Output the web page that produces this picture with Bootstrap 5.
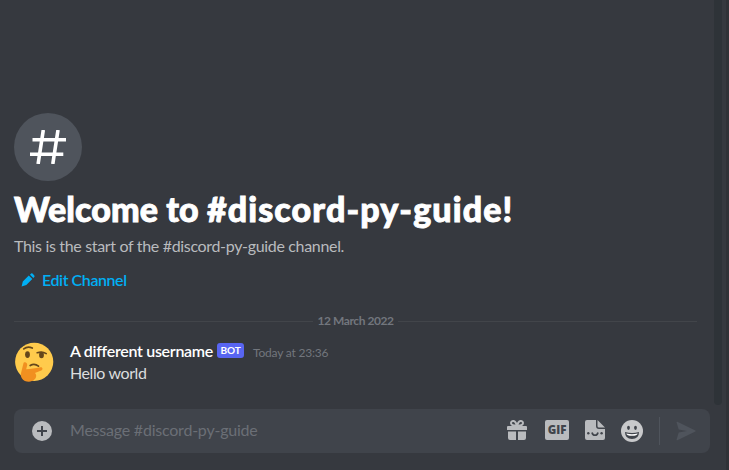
<!DOCTYPE html>
<html lang="en">
<head>
<meta charset="utf-8">
<meta name="viewport" content="width=device-width, initial-scale=1">
<title>discord-py-guide</title>
<link href="https://cdn.jsdelivr.net/npm/bootstrap@5.3.0/dist/css/bootstrap.min.css" rel="stylesheet">
<style>
body{background:#36393f;color:#dcddde;font-family:Lato,"Open Sans",sans-serif;font-size:16px;line-height:22px}
.app{height:470px}
.pane{width:710px;padding-left:14px}
.feed{width:683px}
.hash{width:68px;height:68px;background:#4f545c;margin-top:113px}
h1{font-weight:900;font-size:34px;line-height:40px;color:#fff;margin-top:8px;letter-spacing:.1px;-webkit-text-stroke:.9px #fff}
.topic{letter-spacing:1.1px}
.intro{color:#b9bbbe;line-height:20px;margin-top:7px;letter-spacing:-.33px}
.edit{color:#00aff4;line-height:20px;font-weight:600;margin-top:14px;padding-left:7px;gap:7px;letter-spacing:-.42px}
.rule{height:1px;background:#42454a}
.day{font-size:12px;font-weight:700;color:#72767d;line-height:14px;margin-top:24px;gap:4px;letter-spacing:-.42px}
.msg{margin-top:13px;gap:16px}
.words{margin-top:-1px}
.who{color:#fff;font-weight:600;letter-spacing:-.3px}
.bot{background:#5865f2;color:#fff;font-size:10px;font-weight:700;line-height:15px;height:15px;width:27px;border-radius:3px;margin:0 9px 2px 4px;letter-spacing:-.1px}
.when{font-size:12px;color:#72767d;letter-spacing:-.2px;line-height:16px;margin-top:3px}
.said{letter-spacing:-.4px}
.composer{height:44px;margin-bottom:17px;padding:0 14px 0 18px;background:#40444b;border-radius:8px;color:#b9bbbe}
.hint{color:#6b6f76;margin:0 0 2px 18px;letter-spacing:-.22px}
.gif{width:24px;height:20px;border-radius:2px;background:#b9bbbe;color:#40444b;font:800 11.5px/20px "Open Sans",sans-serif;margin:0 16px 2px 18px}
.split{width:1px;height:28px;background:#4f545c;margin:0 16px}
.thumb{width:8px;height:405px;background:#2e3338;border-radius:0 0 4px 4px;margin-left:4px}
.edge{width:3px;background:#303237}
</style>
<script src="https://cdn.jsdelivr.net/npm/bootstrap@5.3.0/dist/js/bootstrap.bundle.min.js"></script>
</head>
<body class="overflow-hidden">
<div class="app d-flex">
<main class="pane d-flex flex-column flex-shrink-0">
  <section class="feed d-flex flex-column">
    <div class="hash rounded-circle d-flex align-items-center justify-content-center flex-shrink-0">
      <svg width="36" height="34" viewBox="0 0 36 34" stroke="#fff" stroke-width="3.6" fill="none"><path d="M13.3 0 8.1 34M28 0 22.8 34M2.5 9.8H36M0 24.3H33.3"/></svg>
    </div>
    <h1 class="mb-0 text-nowrap">Welcome to <span class="topic">#discord-py-guide!</span></h1>
    <p class="intro mb-0">This is the start of the #discord-py-guide channel.</p>
    <a class="edit d-flex align-items-center text-decoration-none" href="#">
      <svg width="14" height="14" viewBox="0 0 14 14" fill="currentColor"><path d="M7.8 2.6 11.3 6.1 5.3 12.1.6 13.4 1.8 8.6ZM9 1.7 10.1.6Q10.8 0 11.5.6L13.3 2.5Q13.9 3.2 13.3 3.9L12.3 5Z"/></svg>
      <span>Edit Channel</span>
    </a>
    <div class="day d-flex align-items-center"><div class="rule flex-grow-1"></div><span>12 March 2022</span><div class="rule flex-grow-1"></div></div>
    <article class="msg d-flex">
      <svg class="flex-shrink-0" width="40" height="41" viewBox="0 -1 40 41">
        <circle cx="20.2" cy="19.8" r="19.1" fill="#ffcb4c"/>
        <g fill="#65471b"><ellipse cx="13.5" cy="12.6" rx="2.4" ry="3.4"/><ellipse cx="27.5" cy="13" rx="2.4" ry="3.3"/></g>
        <g fill="none" stroke="#65471b" stroke-linecap="round" stroke-width="1.7"><path d="M9.8 6.9Q13.7 3.6 18.3 6.1M23.2 10.7Q28.5 9.3 32.2 11.6M16.2 23.5Q20.5 20.8 24.5 24.2"/></g>
        <path fill="#f19020" d="M9.6 20.7C11.5 19.3 13.7 21 13.1 23.5L12.2 27.3C16 26.9 21.8 26.3 26.3 25.2 28.7 24.8 29.3 27.4 27.2 28.4L20.9 30.9C22.6 32 22.8 35.3 20.4 37.6 17.9 40 14.1 40.1 10.8 38.9 7.5 37.2 6.3 34.3 7.1 30.7Z"/>
      </svg>
      <div class="words">
        <div class="d-flex align-items-center"><span class="who">A different username</span><span class="bot text-center">BOT</span><span class="when">Today at 23:36</span></div>
        <div class="said">Hello world</div>
      </div>
    </article>
  </section>
  <div class="composer mt-auto d-flex align-items-center">
    <svg width="20" height="20" viewBox="0 0 20 20"><circle cx="10" cy="10" r="10" fill="#b9bbbe"/><path d="M10 5V15M5 10H15" stroke="#40444b" stroke-width="2"/></svg>
    <span class="hint me-auto">Message #discord-py-guide</span>
    <svg class="mb-1" width="20" height="21" viewBox="0 0 20 21" fill="#b9bbbe"><path d="M1 7H19Q20 7 20 8V11H0V8Q0 7 1 7ZM1 12.5H9V21H3Q1 21 1 19ZM11 12.5H19V19Q19 21 17 21H11Z"/><path d="M9.6 6.8C7.6 6.7 4 6.6 4 4 4 1.4 8.6.5 9.8 6.8ZM10.4 6.8C12.4 6.7 16 6.6 16 4 16 1.4 11.4.5 10.2 6.8Z" fill="none" stroke="#b9bbbe" stroke-width="2"/></svg>
    <span class="gif text-center">GIF</span>
    <svg style="margin-bottom:2px" width="20" height="20" viewBox="0 0 20 20"><path fill="#b9bbbe" d="M2 0H11V6Q11 9 14 9H20V18Q20 20 18 20H2Q0 20 0 18V2Q0 0 2 0ZM12.5 0 20 7.5H14Q12.5 7.5 12.5 6Z"/><g fill="#40444b"><circle cx="3.3" cy="13.2" r="1.2"/><circle cx="16.6" cy="13.2" r="1.2"/></g><path d="M7 12.5Q7.5 15.2 10 15.2T13 12.5" fill="none" stroke="#40444b" stroke-width="1.6"/></svg>
    <svg style="margin-left:16px" width="22" height="22" viewBox="0 0 22 22"><circle cx="11" cy="11" r="11" fill="#c8c9cb"/><g fill="#40444b"><ellipse cx="7.5" cy="7.8" rx="1.4" ry="2.1"/><ellipse cx="14.5" cy="7.8" rx="1.4" ry="2.1"/><path d="M4 12Q11 14 18 12 18 19 11 19T4 12Z"/></g><path d="M5.3 13.5Q11 14.8 16.7 13.5 16.3 15.8 11 15.8T5.3 13.5Z" fill="#fff"/></svg>
    <div class="split"></div>
    <svg width="20" height="20" viewBox="0 0 20 20" fill="#4f545c"><path d="M1.4.8 19.3 9.4Q20 10 19.3 10.6L1.4 19.3Q.4 19.5.6 18.4L2.7 11.5 11 10 2.7 8.5.6 1.6Q.4.5 1.4.8Z"/></svg>
  </div>
</main>
<div class="thumb"></div>
<div class="edge ms-auto"></div>
</div>
</body>
</html>
